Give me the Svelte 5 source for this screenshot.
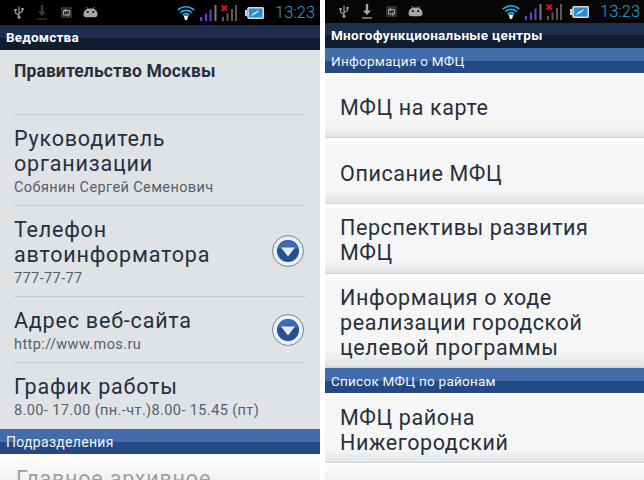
<script>
  const leftRows = [
    { title: ['Руководитель', 'организации'], sub: 'Собянин Сергей Семенович', h: 91 },
    { title: ['Телефон', 'автоинформатора'], sub: '777-77-77', h: 91, arrow: true },
    { title: ['Адрес веб-сайта'], sub: 'http://www.mos.ru', h: 66, arrow: true },
    { title: ['График работы'], sub: '8.00- 17.00 (пн.-чт.)8.00- 15.45 (пт)', h: 66, last: true }
  ];
  const topItems = [
    { lines: ['МФЦ на карте'], h: 65, pad: 4 },
    { lines: ['Описание МФЦ'], h: 66, pad: 5 },
    { lines: ['Перспективы развития', 'МФЦ'], h: 70, pad: 1 },
    { lines: ['Информация о ходе', 'реализации городской', 'целевой программы'], h: 94, pad: 3 }
  ];
</script>

{#snippet status(cls)}
  <div class="status {cls}">
    <svg class="usb" viewBox="0 0 10 13" width="10" height="13">
      <path d="M5 0.500v11M5 9.500L1.500 7V4.500M5 7.500L8.500 5.500V3.500" fill="none" stroke="#a0a0a0" stroke-width="1.200"/>
      <circle cx="5" cy="11.300" r="1.500" fill="#a0a0a0"/>
      <rect x="0.300" y="3" width="2.400" height="2" fill="#a0a0a0"/>
      <rect x="7.300" y="2" width="2.400" height="2" fill="#a0a0a0"/>
    </svg>
    <svg class="dl" viewBox="0 0 10 15" width="10" height="15">
      <path d="M3.800 0h2.400v6.500H9L5 11 1 6.500h2.800z" fill="var(--dl)"/>
      <rect x="0" y="13.300" width="10" height="1.300" fill="var(--dl)"/>
    </svg>
    <svg class="sync" viewBox="0 0 11 11" width="11" height="11">
      <rect width="11" height="11" fill="#2e2e2e"/>
      <path d="M2.500 3.500h6v4.500h-6zM5 2L3.300 3.500 5 5M6 6.500L7.700 8 6 9.500" fill="none" stroke="#a8a8a8" stroke-width="1"/>
    </svg>
    <svg class="droid" viewBox="0 0 15 11" width="15" height="11">
      <path d="M0.500 7.500C0.500 3.300 3.500 1.500 7.500 1.500s7 1.800 7 6c0 1.800-1 2.800-2.800 2.800H3.300C1.500 10.300.5 9.300.5 7.500z" fill="#a6a6a6"/>
      <circle cx="4.800" cy="5" r="1" fill="#000"/>
      <circle cx="10.200" cy="5" r="1" fill="#000"/>
      <path d="M3.500 0l1.500 2M11.500 0L10 2" stroke="#a6a6a6" stroke-width=".8"/>
    </svg>
    <svg class="wifi" viewBox="0 0 18 15" width="18" height="15">
      <path d="M.8 5.200C5.500.6 12.500.6 17.200 5.200M3.300 7.600c3.300-2.900 8.100-2.900 11.400 0M5.800 10c1.900-1.500 4.500-1.500 6.400 0" fill="none" stroke="#28a8e6" stroke-width="1.700"/>
      <path d="M6.500 10.500h5L10 15H8z" fill="#e6f4fb"/>
    </svg>
    <svg class="signal" viewBox="0 0 17 16" width="17" height="16">
      <rect x="0" y="12" width="2" height="4" fill="#6a3ed6"/>
      <rect x="5" y="8.500" width="2" height="7.500" fill="#6a3ed6"/>
      <rect x="9.500" y="4.500" width="2" height="11.500" fill="#6a3ed6"/>
      <rect x="14.500" y="0" width="2" height="16" fill="#7a7a7a"/>
    </svg>
    <svg class="nosignal" viewBox="0 0 16 16" width="16" height="16">
      <rect x="1" y="12" width="2" height="4" fill="#5a5a5a"/>
      <rect x="5.500" y="8.500" width="2" height="7.500" fill="#5a5a5a"/>
      <rect x="10" y="4" width="2" height="12" fill="#5a5a5a"/>
      <rect x="14" y="0" width="2" height="16" fill="#5a5a5a"/>
      <path d="M.5.500L6 5.500M6 .5L.5 5.500" stroke="#e8121b" stroke-width="1.900"/>
    </svg>
    <svg class="batt" viewBox="0 0 19 12" width="19" height="12">
      <rect x="0" y="3" width="2" height="6" fill="#d2d2d2"/>
      <rect x="3" y=".8" width="15.300" height="10.400" rx="1" fill="#1f8fdc" stroke="#dcdcdc" stroke-width="1.600"/>
      <path d="M6.500 8.500L9.500 5.800H10.500L13.500 3.500 11 6.500H10z" fill="#fff" stroke="#fff" stroke-width=".6"/>
    </svg>
    <span class="time">13:23</span>
  </div>
{/snippet}

{#snippet arrow()}
  <span class="round">
    <svg viewBox="0 0 32 32" width="32" height="32">
      <circle cx="16" cy="16" r="15.500" fill="#eceef0" stroke="#6f86a6" stroke-width="1"/>
      <circle cx="16" cy="16" r="11" fill="#23508f"/>
      <path d="M5.400 13.500a11 11 0 0 1 21.200 0z" fill="#3a6cb3"/>
      <path d="M9 12.500h14L16 21.500z" fill="#e6e9ee"/>
    </svg>
  </span>
{/snippet}

<div class="screen">
  <section class="phone left">
    {@render status('s-left')}
    <div class="titlebar">Ведомства</div>
    <div class="body">
      <h2 class="org">Правительство Москвы</h2>
      {#each leftRows as r}
        <div class="row" class:last={r.last} style="height:{r.h}px">
          <div class="rowtext">
            {#each r.title as t}<div class="rt">{t}</div>{/each}
            <div class="rs">{r.sub}</div>
          </div>
          {#if r.arrow}{@render arrow()}{/if}
        </div>
      {/each}
    </div>
    <div class="section">Подразделения</div>
    <div class="peek"><span>Главное архивное</span></div>
  </section>

  <section class="phone right">
    {@render status('s-right')}
    <div class="titlebar t-small">Многофункциональные центры</div>
    <div class="section small">Информация о МФЦ</div>
    <div class="items">
      {#each topItems as it}
        <div class="item" style="height:{it.h}px;padding-top:{it.pad}px">
          {#each it.lines as l}<div>{l}</div>{/each}
        </div>
      {/each}
    </div>
    <div class="section small">Список МФЦ по районам</div>
    <div class="item two"><div>МФЦ района</div><div>Нижегородский</div></div>
    <div class="item stub"></div>
  </section>
</div>

<style>
  :global(body) { margin: 0; background: #fff; }
  .screen { width: 644px; height: 480px; display: flex; justify-content: space-between; overflow: hidden; font-family: Roboto, "Noto Sans", sans-serif; }
  .phone { height: 480px; overflow: hidden; display: flex; flex-direction: column; }
  .left { width: 320px; background: #dfe3e6; }
  .right { width: 319px; background: #f5f5f5; }

  .status { height: 25px; flex: none; background: #000; display: flex; align-items: center; --dl: #3a3a3a; }
  .s-right { height: 23px; background: #060606; --dl: #a8a8a8; }
  .status svg { flex: none; }
  .usb { margin-left: 14px; }
  .dl { margin-left: 13px; }
  .sync { margin-left: 14px; }
  .droid { margin-left: 11px; }
  .wifi { margin-left: 79px; }
  .signal { margin-left: 5px; }
  .nosignal { margin-left: 4px; }
  .batt { margin-left: 8px; }
  .time { font-size: 16.500px; color: #2d9fd6; margin-left: 11px; font-weight: 300; white-space: nowrap; }

  .titlebar { height: 25px; flex: none; box-sizing: border-box; padding-left: 6px; color: #fff; font-weight: 700; font-size: 13.500px; letter-spacing: .2px; line-height: 25px; background: linear-gradient(#1c2e4b 0 50%, #101c30 50% 100%); }
  .t-small { letter-spacing: .3px; }

  .section { height: 25px; flex: none; box-sizing: border-box; padding-left: 6px; color: #f2f5f9; font-size: 14px; letter-spacing: .3px; line-height: 26px; background: linear-gradient(#426daa 0 52%, #244a85 52% 100%); }
  .section.small { font-size: 13.500px; letter-spacing: .25px; }

  .body { flex: none; height: 379px; box-sizing: border-box; padding: 0 14px; display: flex; flex-direction: column; }
  .org { flex: none; height: 65px; margin: 0; box-sizing: border-box; padding-top: 10px; font-size: 17.500px; letter-spacing: .1px; line-height: 22px; font-weight: 700; color: #26303c; border-bottom: 1px solid #c9ced4; }
  .row { flex: none; box-sizing: border-box; padding-top: 2px; display: flex; align-items: center; justify-content: space-between; border-bottom: 1px solid #c9ced4; }
  .row.last { border-bottom: 0; }
  .rowtext { flex: 1; }
  .rt { font-size: 21.500px; line-height: 25px; color: #26303c; letter-spacing: .8px; }
  .rs { font-size: 14.500px; line-height: 18px; color: #566069; margin-top: 3px; letter-spacing: .4px; }
  .round { flex: none; width: 32px; height: 32px; margin: -2px 2px 0 0; }

  .peek { flex: 1; background: linear-gradient(#fff 0, #f1f1f1 100%); padding: 12px 0 0 16px; overflow: hidden; }
  .peek span { font-size: 21.500px; line-height: 25px; color: #9aa0a6; letter-spacing: .8px; white-space: nowrap; }

  .items { display: flex; flex-direction: column; flex: none; }
  .item { flex: none; box-sizing: border-box; padding: 3px 0 0 15px; color: #26303c; font-size: 21.500px; letter-spacing: .6px; line-height: 25px; display: flex; flex-direction: column; justify-content: center; background: linear-gradient(#fff 0, #fff 3px, #f6f6f6 6px, #f6f6f6 80%, #e3e5e6 98%, #c9cdd1 100%); }
  .item.two { height: 70px; }
  .item.stub { flex: 1; padding: 0; background: linear-gradient(#fff, #efefef); }
</style>
